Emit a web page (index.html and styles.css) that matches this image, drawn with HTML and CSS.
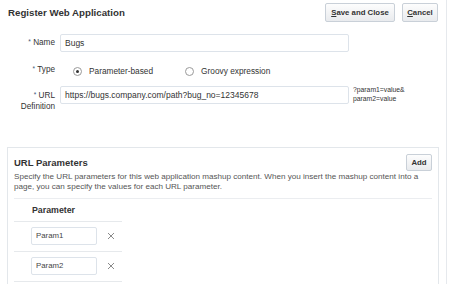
FILE: index.html
```html
<!DOCTYPE html>
<html>
<head>
<meta charset="utf-8">
<link rel="stylesheet" href="styles.css">
</head>
<body>
<div class="page">
  <header class="hdr">
    <h1 class="title">Register Web Application</h1>
    <div class="actions">
      <button class="btn btn-save"><u>S</u>ave and Close</button>
      <button class="btn btn-cancel"><u>C</u>ancel</button>
    </div>
  </header>

  <div class="form">
    <div class="lbl lbl-name"><span class="req">*</span> Name</div>
    <div class="field"><div class="input">Bugs</div></div>
    <div></div>

    <div class="lbl lbl-type"><span class="req">*</span> Type</div>
    <div class="radios">
      <span class="radio checked"></span><span class="rtext">Parameter-based</span>
      <span class="radio radio-2"></span><span class="rtext">Groovy expression</span>
    </div>
    <div></div>

    <div class="lbl lbl-url"><span class="req">*</span> URL<br>Definition</div>
    <div class="field field-url"><div class="input">https://bugs.company.com/path?bug_no=12345678</div></div>
    <div class="note">?param1=value&amp;<br>param2=value</div>
  </div>

  <section class="params">
    <div class="phead">
      <h2 class="ptitle">URL Parameters</h2>
      <button class="btn btn-add">Add</button>
    </div>
    <p class="desc">Specify the URL parameters for this web application mashup content. When you insert the mashup content into a page, you can specify the values for each URL parameter.</p>
    <div class="sep"></div>
    <table class="ptable">
      <thead>
        <tr><th class="c1">Parameter</th><th class="c2"></th></tr>
      </thead>
      <tbody>
        <tr>
          <td class="c1"><div class="input small">Param1</div></td>
          <td class="c2"><svg class="x" width="8" height="8" viewBox="0 0 8 8"><path d="M1 1L7 7M7 1L1 7" stroke="#8a8a8a" stroke-width="1"/></svg></td>
        </tr>
        <tr>
          <td class="c1"><div class="input small">Param2</div></td>
          <td class="c2"><svg class="x" width="8" height="8" viewBox="0 0 8 8"><path d="M1 1L7 7M7 1L1 7" stroke="#8a8a8a" stroke-width="1"/></svg></td>
        </tr>
      </tbody>
    </table>
  </section>
</div>
</body>
</html>
```

FILE: styles.css
```css
* { box-sizing: border-box; }
html, body { margin: 0; padding: 0; background: #fff; }
body {
  font-family: "Liberation Sans", Arial, sans-serif;
  color: #333;
  overflow: hidden;
}
.page {
  width: 447px;
  height: 284px;
  border-right: 1px solid #e6e9ed;
  overflow: hidden;
}
.hdr {
  display: flex;
  align-items: center;
  justify-content: space-between;
  height: 19px;
  margin-top: 3px;
  padding: 0 8px 0 8px;
}
.title {
  margin: 0;
  font-size: 9.7px;
  font-weight: bold;
  color: #333;
  line-height: 12px;
  padding-top: 1px;
}
.actions { display: flex; gap: 7px; }
.btn {
  font-family: "Liberation Sans", Arial, sans-serif;
  font-weight: bold;
  font-size: 7.8px;
  color: #333;
  background: linear-gradient(#fdfdfd, #e9ebee);
  border: 1px solid #c9d0d8;
  border-radius: 2px;
  padding: 0;
  margin: 0;
}
.btn u { text-decoration: underline; }
.btn-save { width: 70px; height: 19px; }
.btn-cancel { width: 36px; height: 19px; }
.btn-add { width: 26px; height: 17px; }

.form {
  display: grid;
  grid-template-columns: 56px 289px auto;
  column-gap: 4px;
  margin-top: 12px;
}
.lbl {
  text-align: right;
  font-size: 8.2px;
  color: #333;
  padding-right: 1px;
}
.req {
  font-size: 6.5px;
  color: #3b5676;
  vertical-align: top;
  position: relative;
  top: -1px;
}
.lbl-name { line-height: 18px; height: 18px; }
.lbl-type { line-height: 10px; margin-top: 12px; height: 14px; padding-top: 1px; }
.lbl-url { line-height: 11px; margin-top: 8px; padding-top: 4px; height: 26px; }
.field-url { margin-top: 8px; }
.input {
  height: 18px;
  border: 1px solid #dde3ea;
  border-radius: 2px;
  background: #fff;
  font-size: 8.5px;
  line-height: 16px;
  padding-left: 4px;
  color: #333;
  white-space: nowrap;
  overflow: hidden;
}
.radios {
  margin-top: 12px;
  height: 14px;
  display: flex;
  align-items: center;
  font-size: 8.3px;
  color: #333;
}
.radio {
  display: inline-block;
  width: 9px;
  height: 9px;
  border: 1px solid #9a9a9a;
  border-radius: 50%;
  margin-left: 13px;
  margin-right: 7px;
  position: relative;
  background: #fff;
}
.radio.checked::after {
  content: "";
  position: absolute;
  left: 2px; top: 2px;
  width: 3px; height: 3px;
  border-radius: 50%;
  background: #333;
}
.radio-2 { margin-left: 32px; }
.note {
  margin-top: 7px;
  font-size: 6.8px;
  line-height: 9px;
  color: #333;
}

.params {
  margin: 35px 7px 0 7px;
  border: 1px solid #e3e7eb;
  border-bottom: none;
  height: 140px;
  padding: 6px 6px 0 6px;
}
.phead {
  display: flex;
  align-items: center;
  justify-content: space-between;
}
.ptitle {
  margin: 0;
  font-size: 9.5px;
  font-weight: bold;
  color: #333;
  line-height: 12px;
}
.desc {
  margin: 1px 0 0 0;
  max-width: 410px;
  font-size: 8.1px;
  line-height: 10px;
  color: #555;
}
.sep {
  margin-top: 6px;
  height: 1px;
  background: #ebedf0;
}
.ptable {
  border-collapse: collapse;
  width: 108px;
}
.ptable th, .ptable td {
  padding: 0;
  border-bottom: 1px solid #e6e9ec;
}
.ptable th {
  height: 22px;
  font-size: 8.8px;
  font-weight: bold;
  text-align: left;
  color: #333;
  padding-left: 18px;
  padding-top: 1px;
}
.ptable td { height: 30px; }
.ptable .c1 { width: 87px; }
.ptable td.c1 { padding-left: 17px; }
.ptable td.c2 { text-align: left; padding-left: 6px; }
.input.small {
  width: 66px;
  font-size: 7.8px;
  color: #444;
}
.x { display: block; }
```
